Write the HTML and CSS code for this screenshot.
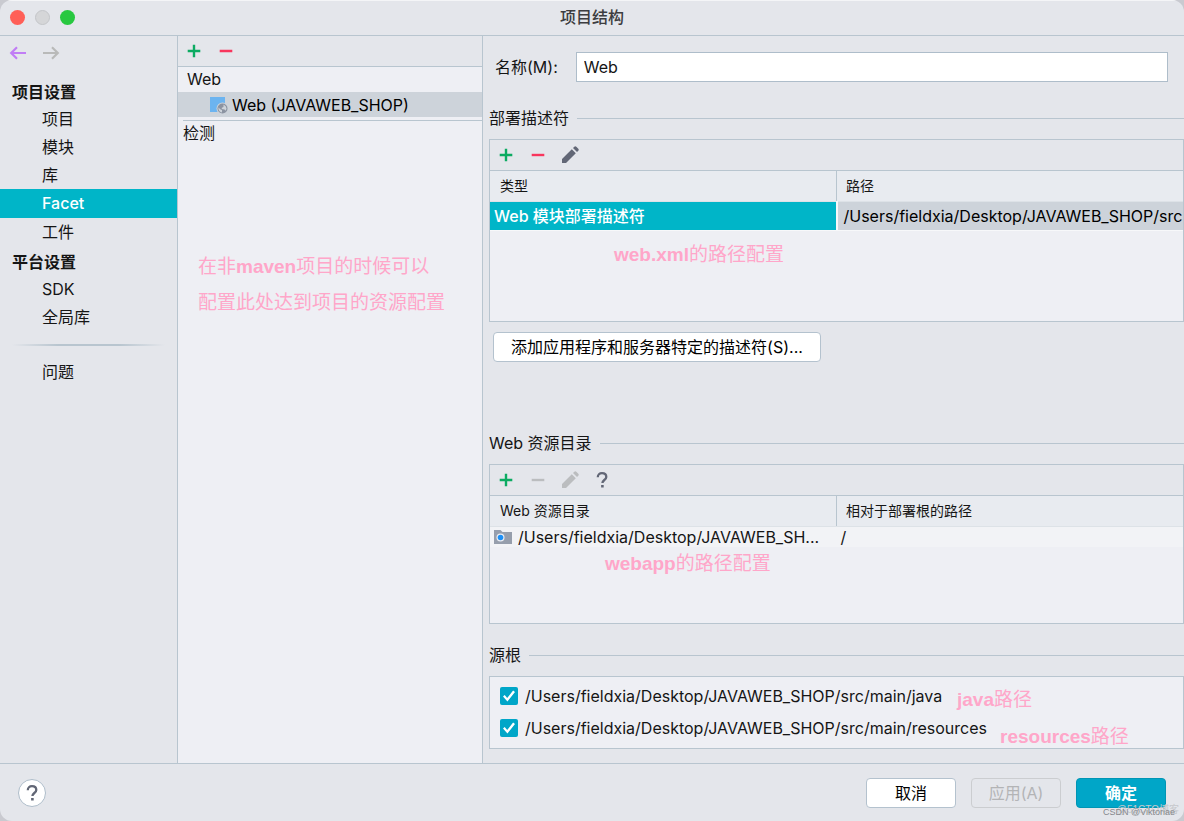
FILE: index.html
```html
<!DOCTYPE html>
<html lang="zh-CN">
<head>
<meta charset="utf-8">
<title>项目结构</title>
<link rel="stylesheet" href="styles.css">
</head>
<body>
<svg class="defs" aria-hidden="true">
  <symbol id="plus" viewBox="0 0 18 18"><path d="M9 2.7v12.6M2.7 9h12.6" fill="none" stroke="currentColor" stroke-width="2.4"/></symbol>
  <symbol id="minus" viewBox="0 0 18 18"><path d="M2.7 9h12.6" fill="none" stroke="currentColor" stroke-width="2.4"/></symbol>
  <symbol id="pencil" viewBox="0 0 18 18"><path d="M1 17v-4L10.8 3.2l4 4L5 17zM12 2.1l1.3-1.3a1.5 1.5 0 0 1 2 0l2 2a1.5 1.5 0 0 1 0 2L16 6.1z" fill="currentColor"/></symbol>
  <symbol id="help" viewBox="0 0 18 18"><path d="M4.8 6.2C4.8 3.7 6.5 2.2 9 2.2s4.300 1.500 4.300 3.700c0 3-3.900 3.200-3.900 6.100" fill="none" stroke="currentColor" stroke-width="2.300"/><path d="M8.100 14h2.600v2.500H8.100z" fill="currentColor"/></symbol>
</svg>
<div class="window">
  <header class="titlebar">
    <div class="lights">
      <button class="light light-close" aria-label="关闭"></button>
      <button class="light light-min" aria-label="最小化"></button>
      <button class="light light-zoom" aria-label="缩放"></button>
    </div>
    <h1 class="title">项目结构</h1>
  </header>

  <div class="body">
    <nav class="sidebar">
      <div class="history">
        <button class="arrow arrow-back" aria-label="后退"><svg viewBox="0 0 18 14"><path d="M17 7H2M8 1.300L2.200 7 8 12.700" fill="none" stroke="currentColor" stroke-width="2.200"/></svg></button>
        <button class="arrow arrow-next" aria-label="前进"><svg viewBox="0 0 18 14"><path d="M1 7h15M10 1.300L15.800 7 10 12.700" fill="none" stroke="currentColor" stroke-width="2.200"/></svg></button>
      </div>
      <h2 class="nav-title">项目设置</h2>
      <a class="nav-item" href="#">项目</a>
      <a class="nav-item" href="#">模块</a>
      <a class="nav-item" href="#">库</a>
      <a class="nav-item nav-current" href="#">Facet</a>
      <a class="nav-item" href="#">工件</a>
      <h2 class="nav-title">平台设置</h2>
      <a class="nav-item" href="#">SDK</a>
      <a class="nav-item" href="#">全局库</a>
      <div class="nav-rule"></div>
      <a class="nav-item" href="#">问题</a>
    </nav>

    <section class="facets">
      <div class="toolbar">
        <button class="tool green" aria-label="添加"><svg><use href="#plus"/></svg></button>
        <button class="tool red" aria-label="移除"><svg><use href="#minus"/></svg></button>
      </div>
      <div class="tree-group">Web</div>
      <div class="tree-item">
        <svg class="facet-icon" viewBox="0 0 18 18"><path d="M0 1h15v15H0z" fill="#6cb4f0"/><circle cx="12.500" cy="12.500" r="6" fill="#cdd3da"/><circle cx="12.500" cy="12.500" r="5" fill="#8b93a1"/><path d="M8.400 11.400l2.200 2 1.400.600v2.600c-2.200-.500-3.900-2.600-3.600-5.200zM13.500 8.600l2.200 1.600.800 2.300-.700 2.300-1.300-1.300-2.700-.500v-1.200l1.700-.800z" fill="#cdd3da"/></svg>
        <span>Web (JAVAWEB_SHOP)</span>
      </div>
      <div class="tree-check">检测</div>
      <div class="note note-maven">在非<b>maven</b>项目的时候可以<br>配置此处达到项目的资源配置</div>
    </section>

    <main class="detail">
      <div class="field">
        <label for="name">名称(M):</label>
        <input id="name" type="text" value="Web">
      </div>

      <h3 class="section">部署描述符</h3>
      <div class="panel panel-descriptors">
        <div class="toolbar">
          <button class="tool green" aria-label="添加"><svg><use href="#plus"/></svg></button>
          <button class="tool red" aria-label="移除"><svg><use href="#minus"/></svg></button>
          <button class="tool slate" aria-label="编辑"><svg><use href="#pencil"/></svg></button>
        </div>
        <table class="grid">
          <thead><tr><th>类型</th><th>路径</th></tr></thead>
          <tbody><tr class="selected"><td>Web 模块部署描述符</td><td>/Users/fieldxia/Desktop/JAVAWEB_SHOP/src</td></tr></tbody>
        </table>
        <div class="note note-xml"><b>web.xml</b>的路径配置</div>
      </div>
      <button class="button button-add">添加应用程序和服务器特定的描述符(S)...</button>

      <h3 class="section">Web 资源目录</h3>
      <div class="panel panel-resources">
        <div class="toolbar">
          <button class="tool green" aria-label="添加"><svg><use href="#plus"/></svg></button>
          <button class="tool off" aria-label="移除" disabled><svg><use href="#minus"/></svg></button>
          <button class="tool off" aria-label="编辑" disabled><svg><use href="#pencil"/></svg></button>
          <button class="tool slate" aria-label="帮助"><svg><use href="#help"/></svg></button>
        </div>
        <table class="grid">
          <thead><tr><th>Web 资源目录</th><th>相对于部署根的路径</th></tr></thead>
          <tbody><tr class="plain"><td><div class="path"><svg class="folder" viewBox="0 0 18 14"><path d="M0 0h6.500l2 2H18v12H0z" fill="#969eac"/><circle cx="6.500" cy="7.500" r="4" fill="#eceef3"/><circle cx="6.500" cy="7.500" r="2.800" fill="#1e90f5"/></svg><span>/Users/fieldxia/Desktop/JAVAWEB_SH...</span></div></td><td>/</td></tr></tbody>
        </table>
        <div class="note note-webapp"><b>webapp</b>的路径配置</div>
      </div>

      <h3 class="section">源根</h3>
      <div class="panel panel-roots">
        <label class="root"><input type="checkbox" checked><span>/Users/fieldxia/Desktop/JAVAWEB_SHOP/src/main/java</span></label>
        <label class="root"><input type="checkbox" checked><span>/Users/fieldxia/Desktop/JAVAWEB_SHOP/src/main/resources</span></label>
        <div class="note note-java"><b>java</b>路径</div>
        <div class="note note-res"><b>resources</b>路径</div>
      </div>
    </main>
  </div>

  <footer class="footer">
    <button class="help" aria-label="帮助"><svg><use href="#help"/></svg></button>
    <button class="button">取消</button>
    <button class="button" disabled>应用(A)</button>
    <button class="button button-ok">确定</button>
    <div class="mark mark-back">@51CTO博客</div>
    <div class="mark">CSDN @Viktoriae</div>
  </footer>
</div>
</body>
</html>
```

FILE: styles.css
```css
* { box-sizing: border-box; }

body {
  margin: 0;
  background: #c9cad0;
  color: #151515;
  font: 16px/20px Inter, "Noto Sans CJK SC", sans-serif;
}

button, input { font: inherit; color: inherit; }
button { padding: 0; border: 0; background: none; }
h1, h2, h3 { margin: 0; font-size: 16px; font-weight: 400; }
.defs { display: none; }

.window {
  display: flex;
  flex-direction: column;
  min-height: 100vh;
  overflow: hidden;
  border-radius: 12px;
  background: #e4e6eb;
}

/* Title bar */
.titlebar {
  display: grid;
  grid-template-columns: 1fr auto 1fr;
  align-items: center;
  height: 36px;
  padding: 0 10px 2px;
  border-top: 1px solid #f4f5f7;
  border-bottom: 1px solid #b8c5cf;
}
.lights { display: flex; gap: 10px; }
.light { width: 15px; height: 15px; border-radius: 50%; }
.light-close { background: #ff5f57; }
.light-min { background: #d5d6d8; border: 1px solid #c3c5c8; }
.light-zoom { background: #28c840; }
.title { color: #3c3d40; font-weight: 500; }

.body {
  display: grid;
  grid-template-columns: 178px 305px minmax(0, 1fr);
  flex: 1;
}

/* Left navigation */
.sidebar { border-right: 1px solid #b8c5cf; }
.history { display: flex; gap: 15px; padding: 10px 9px 18px; }
.arrow { width: 18px; height: 14px; }
.arrow svg { display: block; width: 18px; height: 14px; }
.arrow-back { color: #c17ef5; }
.arrow-next { color: #b9bab9; }
.nav-title {
  height: 27px;
  padding-left: 12px;
  font-weight: 600;
  line-height: 28px;
}
.nav-item + .nav-title { margin-top: 2px; }
.nav-item {
  display: block;
  height: 28px;
  padding-left: 42px;
  color: inherit;
  line-height: 28px;
  text-decoration: none;
}
.nav-current {
  height: 29px;
  background: #00b5c8;
  color: #fff;
  font-weight: 500;
  line-height: 29px;
}
.nav-rule {
  height: 2px;
  margin: 13px 12px 12px;
  background: linear-gradient(90deg, transparent, #b8c5cf 30%, #b8c5cf 70%, transparent);
}

/* Facet tree */
.facets {
  position: relative;
  border-right: 1px solid #b8c5cf;
  background: #eeeff4;
}
.toolbar {
  display: flex;
  align-items: center;
  gap: 14px;
  height: 31px;
  padding-left: 7px;
  border-bottom: 1px solid #b8c5cf;
  background: #e4e6eb;
}
.tool, .tool svg { display: block; width: 18px; height: 18px; }
.green { color: #0cab62; }
.red { color: #f8365d; }
.slate { color: #626776; }
.off { color: #bbbdbf; }
.tree-group { padding-left: 9px; line-height: 25px; }
.tree-item {
  display: flex;
  align-items: center;
  gap: 4px;
  height: 25px;
  padding-left: 32px;
  background: #cdd3da;
  color: #000;
}
.facet-icon { width: 18px; height: 18px; }
.tree-check {
  margin: 3px 0 0 5px;
  border-top: 1px solid #b8c5cf;
  line-height: 24px;
}

/* Facet details */
.detail { padding: 16px 0 0 6px; }
.field { display: flex; align-items: center; gap: 18px; padding: 0 16px 0 6px; }
.field input {
  flex: 1;
  min-width: 0;
  height: 30px;
  padding: 0 7px;
  border: 1px solid #aebdca;
  background: #fff;
}
.section {
  display: flex;
  align-items: center;
  gap: 8px;
  margin-top: 26px;
  line-height: 21px;
}
.section::after { content: ""; flex: 1; height: 1px; background: #b8c5cf; }
.panel {
  position: relative;
  margin-top: 10px;
  border: 1px solid #b8c5cf;
  background: #eeeff4;
}
.panel-descriptors { height: 183px; }
.panel-resources { height: 160px; }
.grid { width: 100%; table-layout: fixed; border-collapse: collapse; }
.grid th {
  height: 30px;
  padding: 0 10px;
  border-bottom: 1px solid #dde2e7;
  background: #e8ebf0;
  font-size: 14px;
  font-weight: 400;
  text-align: left;
}
.grid th + th { padding-left: 9px; border-left: 1px solid #b8c5cf; }
.grid th:first-child { width: 50%; }
.grid td { overflow: hidden; padding: 0 4px; white-space: nowrap; }
.selected td { height: 29px; border-bottom: 1px solid #f7f8fa; background: #cdd3da; color: #000; }
.selected td:first-child {
  border-right: 2px solid #f7f8fa;
  background: #00b5c8;
  color: #fff;
  font-weight: 500;
}
.grid .selected td + td { padding: 0 0 0 6px; }
.plain td { height: 20px; background: #f2f3f6; }
.path { display: flex; align-items: center; gap: 6px; }
.folder { flex: none; width: 18px; height: 14px; }

.button {
  height: 30px;
  border: 1px solid #b4c2ce;
  border-radius: 4px;
  background: #fff;
  color: #000;
}
.button:disabled { border-color: #cbcdd0; background: none; color: #b3b4b6; }
.button-add { display: block; width: 328px; margin: 10px 0 0 4px; }
.button-add + .section { margin-top: 71px; }
.panel-resources + .section { margin-top: 21px; }

.panel-roots { display: grid; gap: 12px; padding: 9px 10px 10px; }
.root { display: flex; align-items: center; gap: 7px; }
.root input {
  display: grid;
  place-items: center;
  width: 18px;
  height: 18px;
  margin: 0;
  border-radius: 2px;
  background: #00a6c8;
  appearance: none;
}
.root input:checked::before {
  content: "";
  width: 12px;
  height: 12px;
  background: #fff;
  clip-path: polygon(0 55%, 14% 42%, 35% 66%, 84% 4%, 100% 16%, 37% 96%);
}

/* Pink annotations laid over the window */
.note {
  position: absolute;
  color: #ffa6c9;
  font: 19px/36px "Liberation Sans", "Noto Sans CJK SC", sans-serif;
  white-space: nowrap;
}
.note-maven { top: 213px; left: 20px; }
.note-xml { top: 97px; left: 124px; }
.note-webapp { top: 81px; left: 115px; }
.note-java { top: 5px; left: 467px; }
.note-res { top: 42px; left: 510px; }

/* Footer */
.footer {
  position: relative;
  display: flex;
  align-items: center;
  gap: 15px;
  height: 58px;
  padding: 0 18px;
  border-top: 1px solid #b8c5cf;
}
.footer .button { width: 90px; }
.help {
  display: grid;
  place-items: center;
  width: 28px;
  height: 28px;
  margin-right: auto;
  border: 1px solid #aebdca;
  border-radius: 50%;
  background: #fff;
  color: #626776;
}
.help svg { width: 18px; height: 18px; }
.footer .button-ok { border-color: #0095b4; background: #00a6c8; color: #fff; font-weight: 600; }
.mark {
  position: absolute;
  right: 9px;
  bottom: 3px;
  color: #85878b;
  font: 9px/12px "Liberation Sans", "Noto Sans CJK SC", sans-serif;
}
.mark-back { right: 5px; bottom: 5px; color: #c6c8cc; font-size: 10px; }
```
